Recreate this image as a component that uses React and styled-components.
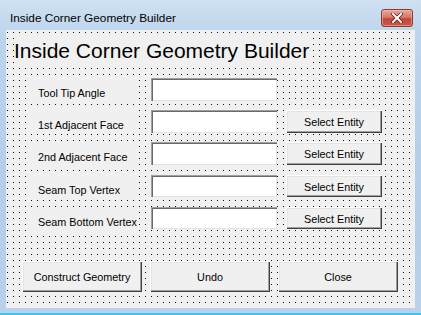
import React from "react";
import styled, { createGlobalStyle } from "styled-components";

const Global = createGlobalStyle`
  html, body { margin: 0; padding: 0; background: #fff; }
  body { width: 421px; height: 315px; overflow: hidden; }
`;

const Win = styled.div`
  width: 421px;
  height: 315px;
  display: flex;
  flex-direction: column;
  background: linear-gradient(180deg, #cfe0f2 0%, #bcd4ec 12%, #b5cee9 60%, #b9d1ea 100%);
  font-family: "Liberation Sans", Arial, sans-serif;
  box-sizing: border-box;
`;

const TitleBar = styled.div`
  height: 30px;
  display: flex;
  align-items: flex-start;
  justify-content: space-between;
  padding: 0 8px 0 10px;
  box-sizing: border-box;
`;

const TitleText = styled.div`
  font-size: 11.8px;
  color: #000;
  line-height: 14px;
  margin-top: 11px;
`;

const CloseBtn = styled.div`
  width: 32px;
  height: 18px;
  margin-top: 9px;
  box-sizing: border-box;
  border: 1px solid #8c3a30;
  border-radius: 3px;
  background: linear-gradient(180deg, #e9a699 0%, #d67a68 45%, #c3463a 55%, #c9584a 100%);
  box-shadow: inset 0 0 0 1px rgba(255, 200, 190, 0.45);
  display: flex;
  align-items: center;
  justify-content: center;
`;

const Client = styled.div`
  margin: 0 6px;
  height: 278px;
  box-sizing: border-box;
  background-color: #f0f0f0;
  background-image: conic-gradient(from 0deg at 1px 1px, transparent 75%, #111 0);
  background-size: 6px 6px;
  background-position: 1px 2px;
  padding-top: 6px;
  display: flex;
  flex-direction: column;
`;

const Heading = styled.div`
  margin-left: 8px;
  height: 30px;
  line-height: 30px;
  font-size: 21px;
  color: #000;
  background: #f0f0f0;
  align-self: flex-start;
  padding-right: 2px;
`;

const Form = styled.div`
  margin-top: 12px;
  display: grid;
  grid-template-columns: 121px 126px 105px;
  grid-auto-rows: 23px;
  row-gap: 9px;
  column-gap: 0;
  padding-left: 24px;
`;

const Label = styled.div`
  grid-column: 1;
  height: 24px;
  background: #f0f0f0;
  padding: 8px 0 0 8px;
  box-sizing: border-box;
  font-size: 10.8px;
  line-height: 14px;
  color: #000;
  white-space: nowrap;
  margin-right: 14px;
  margin-top: ${(p) => p.$dy || 0}px;
`;

const Field = styled.div`
  grid-column: 2;
  background: #fff;
  box-shadow: inset 1px 1px 0 #a0a0a0, inset 2px 2px 0 #696969, inset -1px -1px 0 #e3e3e3;
  margin-top: ${(p) => p.$dy || 0}px;
`;

const Btn = styled.div`
  background: #f0f0f0;
  box-sizing: border-box;
  box-shadow: inset 1px 1px 0 #fff, inset -1px -1px 0 #404040, inset -2px -2px 0 #a0a0a0,
    inset 2px 2px 0 #e3e3e3;
  display: flex;
  align-items: center;
  justify-content: center;
  font-size: 10.8px;
  color: #000;
  white-space: nowrap;
`;

const SelectBtn = styled(Btn)`
  grid-column: 3;
  margin-left: 9px;
  margin-top: ${(p) => p.$dy || 0}px;
  padding-top: 1px;
`;

const Footer = styled.div`
  margin-top: 32px;
  padding-left: 16px;
  display: flex;
  gap: 8px;
`;

const BigBtn = styled(Btn)`
  width: 120px;
  height: 31px;
`;

const BottomEdge = styled.div`
  flex: 1;
  display: flex;
  flex-direction: column;
  justify-content: flex-end;
`;

const Cyan = styled.div`
  height: 2px;
  background: #3cc6ef;
`;

const rows = [
  { label: "Tool Tip Angle", select: false, dy: 0 },
  { label: "1st Adjacent Face", select: true, dy: 0 },
  { label: "2nd Adjacent Face", select: true, dy: 0 },
  { label: "Seam Top Vertex", select: true, dy: 1 },
  { label: "Seam Bottom Vertex", select: true, dy: 1 },
];

export default function App() {
  return (
    <>
      <Global />
      <Win>
        <TitleBar>
          <TitleText>Inside Corner Geometry Builder</TitleText>
          <CloseBtn>
            <svg width="12" height="10" viewBox="0 0 12 10">
              <path d="M2 1 L10 9 M10 1 L2 9" stroke="#5a1a14" strokeWidth="3.4" strokeLinecap="square" />
              <path d="M2 1 L10 9 M10 1 L2 9" stroke="#ffffff" strokeWidth="2" strokeLinecap="square" />
            </svg>
          </CloseBtn>
        </TitleBar>
        <Client>
          <Heading>Inside Corner Geometry Builder</Heading>
          <Form>
            {rows.map((r) => (
              <React.Fragment key={r.label}>
                <Label $dy={r.dy}>{r.label}</Label>
                <Field $dy={r.dy} />
                {r.select ? <SelectBtn $dy={r.dy}>Select Entity</SelectBtn> : <div />}
              </React.Fragment>
            ))}
          </Form>
          <Footer>
            <BigBtn>Construct Geometry</BigBtn>
            <BigBtn>Undo</BigBtn>
            <BigBtn>Close</BigBtn>
          </Footer>
        </Client>
        <BottomEdge>
          <Cyan />
        </BottomEdge>
      </Win>
    </>
  );
}
